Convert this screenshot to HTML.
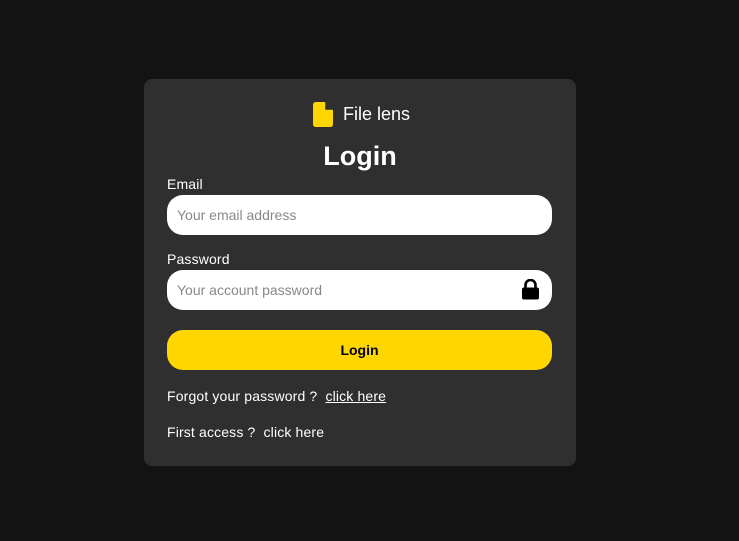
<!DOCTYPE html>
<html><head><style>
body{margin:0;width:739px;height:541px;background:#131313;font-family:"Liberation Sans",sans-serif;position:relative;overflow:hidden}
.card{position:absolute;left:144px;top:79px;width:432px;height:387px;background:#2f2f2f;border-radius:8px}
.abs{position:absolute}
.lbl{color:#fff;font-size:14px;letter-spacing:0.15px}
.inp{position:absolute;left:23px;width:385px;height:40px;background:#fff;border-radius:16px;color:#888;font-size:14px;line-height:40px;box-sizing:border-box;padding-left:10px}
</style></head><body>
<div class="card">
<svg class="abs" style="left:169px;top:23px" width="20" height="25" viewBox="0 0 20 25"><path d="M3 0H12L20 8V22Q20 25 17 25H3Q0 25 0 22V3Q0 0 3 0Z" fill="#ffd600"/><path d="M13 0L20 7H13Z" fill="#2f2f2f"/><path d="M13 0V7H20" fill="none" stroke="#2f2f2f" stroke-width="1.5"/></svg>
<div class="abs" style="left:199px;top:25px;color:#fff;font-size:18px">File lens</div>
<div class="abs" style="left:0;width:432px;top:62px;text-align:center;color:#fff;font-size:27px;font-weight:bold">Login</div>
<div class="abs lbl" style="left:23px;top:97px">Email</div>
<div class="inp" style="top:116px">Your email address</div>
<div class="abs lbl" style="left:23px;top:172px">Password</div>
<div class="inp" style="top:191px">Your account password</div>
<svg class="abs" style="left:377px;top:200px" width="19" height="21" viewBox="0 0 19 21"><path d="M4.5 9V6a5 5 0 0 1 10 0v3" fill="none" stroke="#000" stroke-width="2.6"/><rect x="1" y="8.5" width="17" height="12" rx="2" fill="#000"/></svg>
<div class="abs" style="left:23px;top:251px;width:385px;height:40px;background:#ffd600;border-radius:16px;text-align:center;line-height:40px;font-size:14px;font-weight:bold;color:#000">Login</div>
<div class="abs lbl" style="left:23px;top:309px">Forgot your password ?&nbsp; <span style="text-decoration:underline">click here</span></div>
<div class="abs lbl" style="left:23px;top:345px">First access ?&nbsp; click here</div>
</div>
</body></html>
